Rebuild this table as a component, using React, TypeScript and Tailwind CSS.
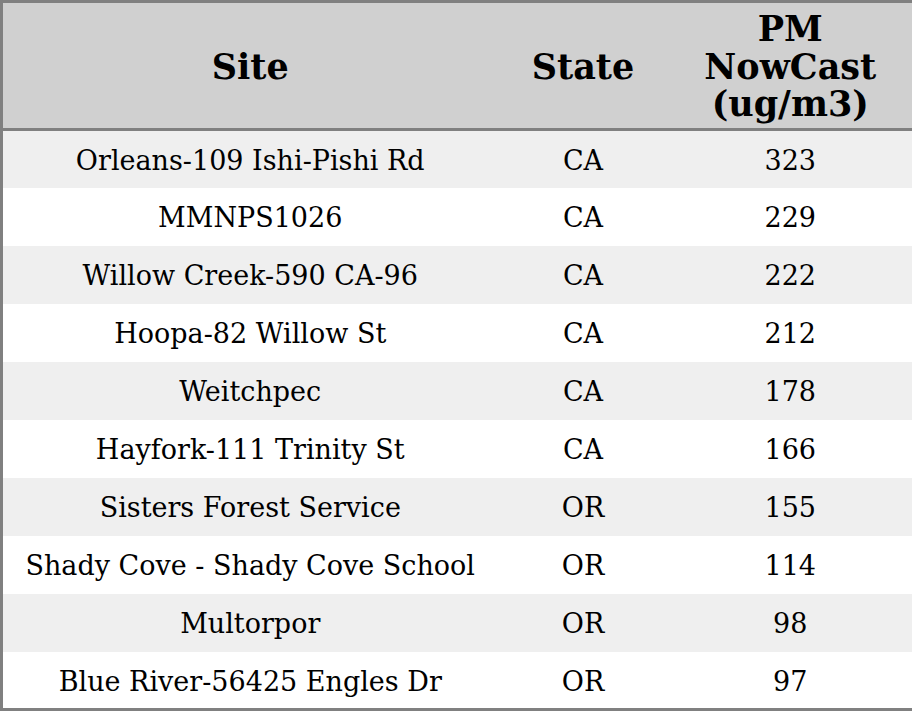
const rows: [string, string, string][] = [
  ['Orleans-109 Ishi-Pishi Rd', 'CA', '323'],
  ['MMNPS1026', 'CA', '229'],
  ['Willow Creek-590 CA-96', 'CA', '222'],
  ['Hoopa-82 Willow St', 'CA', '212'],
  ['Weitchpec', 'CA', '178'],
  ['Hayfork-111 Trinity St', 'CA', '166'],
  ['Sisters Forest Service', 'OR', '155'],
  ['Shady Cove - Shady Cove School', 'OR', '114'],
  ['Multorpor', 'OR', '98'],
  ['Blue River-56425 Engles Dr', 'OR', '97'],
];

export default function App() {
  return (
    <div className="w-[912px] h-[711px] bg-white font-['DejaVu_Serif',serif] text-black">
      <table className="w-full border-collapse border-[3px] border-[#808080] table-fixed">
        <colgroup>
          <col className="w-[496px]" />
          <col className="w-[171px]" />
          <col className="w-[245px]" />
        </colgroup>
        <thead>
          <tr className="bg-[#d0d0d0] h-[128px] border-b-[3px] border-[#808080]">
            <th className="pt-[2px] text-[35px] leading-[37.5px] font-bold">Site</th>
            <th className="pt-[2px] text-[35px] leading-[37.5px] font-bold">State</th>
            <th className="pt-[2px] text-[35px] leading-[37.5px] font-bold">
              PM
              <br />
              NowCast
              <br />
              (ug/m3)
            </th>
          </tr>
        </thead>
        <tbody>
          {rows.map(([site, state, pm], i) => (
            <tr key={site} className={i % 2 === 0 ? 'bg-[#efefef] h-[58px]' : 'bg-white h-[58px]'}>
              <td className="pt-[4px] text-center text-[27px]">{site}</td>
              <td className="pt-[4px] text-center text-[27px]">{state}</td>
              <td className="pt-[4px] text-center text-[27px]">{pm}</td>
            </tr>
          ))}
        </tbody>
      </table>
    </div>
  );
}
